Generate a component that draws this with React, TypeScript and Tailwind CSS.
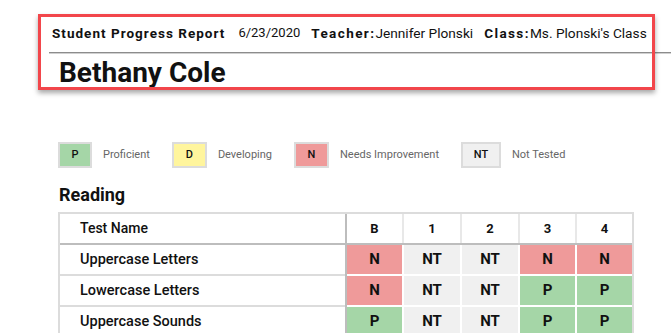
type Status = 'P' | 'D' | 'N' | 'NT'

const cellColor: Record<Status, string> = {
  P: 'bg-[#a5d6a7]',
  D: 'bg-[#fff59d]',
  N: 'bg-[#ef9a9a]',
  NT: 'bg-[#f0f0f0]',
}

const legend: { code: Status; label: string; width: string }[] = [
  { code: 'P', label: 'Proficient', width: 'w-[34px]' },
  { code: 'D', label: 'Developing', width: 'w-[35px]' },
  { code: 'N', label: 'Needs Improvement', width: 'w-[35px]' },
  { code: 'NT', label: 'Not Tested', width: 'w-[40px]' },
]

const columns = ['B', '1', '2', '3', '4']
const colWidths = ['w-[55px]', 'w-[56px]', 'w-[56px]', 'w-[55px]', 'w-[55px]']

const rows: { name: string; scores: Status[] }[] = [
  { name: 'Uppercase Letters', scores: ['N', 'NT', 'NT', 'N', 'N'] },
  { name: 'Lowercase Letters', scores: ['N', 'NT', 'NT', 'P', 'P'] },
  { name: 'Uppercase Sounds', scores: ['P', 'NT', 'NT', 'P', 'P'] },
]

const App = () => {
  return (
    <div className="relative min-h-screen w-[671px] overflow-hidden bg-white font-['Roboto',sans-serif] text-[#111]">
      {/* report header */}
      <div className="pt-[25px]">
        <div className="flex h-[16px] items-center whitespace-nowrap pl-[52px] text-[13px] leading-[16px]">
          <span className="text-[13.5px] font-bold tracking-[1.02px]">Student Progress Report</span>
          <span className="ml-[13px]">6/23/2020</span>
          <span className="ml-[11px] text-[13.5px] font-bold tracking-[1.4px]">Teacher:</span>
          <span className="text-[13.7px]">Jennifer Plonski</span>
          <span className="ml-[11px] text-[13.5px] font-bold tracking-[1.4px]">Class:</span>
          <span className="text-[13.7px]">Ms. Plonski's Class</span>
        </div>
        <div className="ml-[49px] mt-[11px] h-[2px] border-t border-[#8c8c8c] bg-[#d0d0d0]" />
        <h1 className="mt-[3px] pl-[59px] text-[28px] font-bold leading-[32px]">Bethany Cole</h1>
      </div>

      {/* legend */}
      <div className="mt-[53px] flex items-center pl-[58px]">
        {legend.map((l) => (
          <div key={l.code} className="flex items-center">
            <div
              className={`flex h-[26px] ${l.width} items-center justify-center border-2 border-[#dcdcdc] ${cellColor[l.code]} text-[11px] font-medium`}
            >
              {l.code}
            </div>
            <span className="ml-[11px] mr-[22px] text-[11px] text-[#666]">{l.label}</span>
          </div>
        ))}
      </div>

      <h2 className="mt-[16px] pl-[59px] text-[18px] font-bold leading-[22px]">Reading</h2>

      {/* scores table */}
      <div className="ml-[58px] mt-[6px] w-[576px] border-x-2 border-t-2 border-[#dcdcdc]">
        <div className="flex border-b-2 border-[#bdbdbd]">
          <div className="flex h-[29px] w-[285px] items-center pl-[20px] text-[14px] font-medium">Test Name</div>
          <div className="flex gap-[2px] border-l-2 border-[#bdbdbd] bg-[#e8e8e8]">
            {columns.map((c, i) => (
              <div
                key={c}
                className={`flex h-[29px] ${colWidths[i]} items-center justify-center bg-white text-[13px] font-bold`}
              >
                {c}
              </div>
            ))}
          </div>
        </div>
        {rows.map((r) => (
          <div key={r.name} className="flex">
            <div className="flex h-[31px] w-[285px] items-start border-b-2 border-[#dcdcdc]">
              <div className="flex h-[29px] items-center pl-[20px] text-[14.5px] font-medium">{r.name}</div>
            </div>
            <div className="flex gap-[2px] border-l-2 border-[#bdbdbd] pb-[2px]">
              {r.scores.map((s, i) => (
                <div
                  key={i}
                  className={`flex h-[29px] ${colWidths[i]} items-center justify-center ${cellColor[s]} text-[15px] font-bold`}
                >
                  {s}
                </div>
              ))}
            </div>
          </div>
        ))}
      </div>

      {/* annotation box */}
      <div className="pointer-events-none absolute left-[38px] top-[14px] h-[76px] w-[617px] border-[3px] border-[#f2464b] shadow-[0_3px_5px_rgba(0,0,0,0.35)]" />
    </div>
  )
}

export default App
